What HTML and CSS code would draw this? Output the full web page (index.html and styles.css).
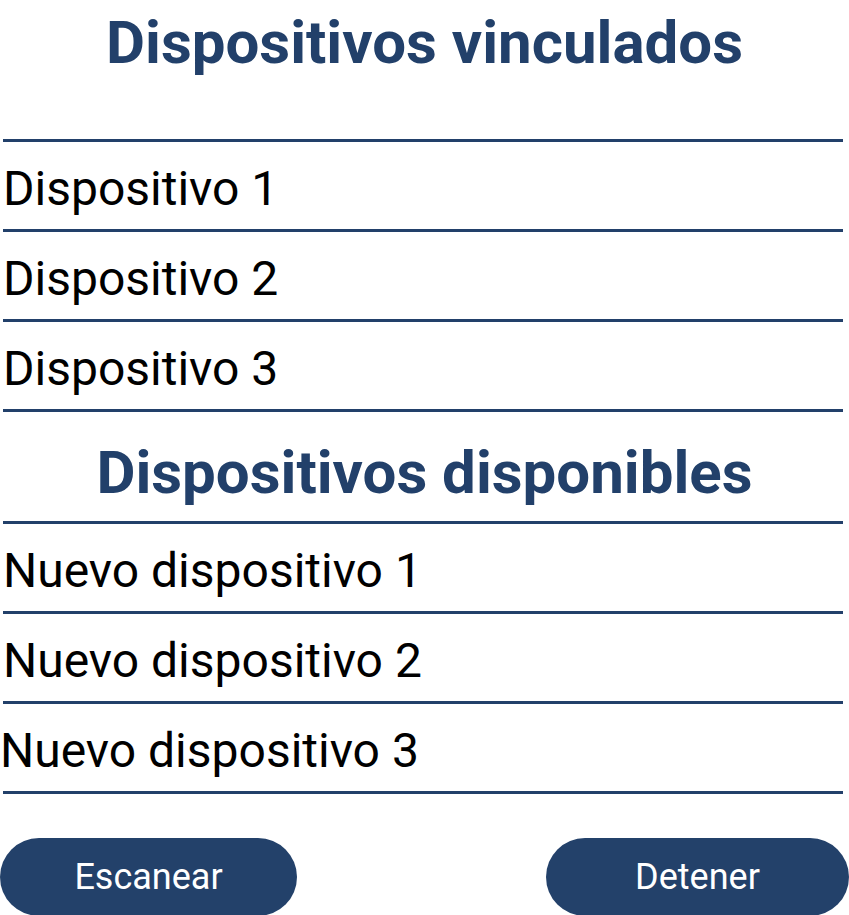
FILE: index.html
```html
<!DOCTYPE html>
<html lang="es">
<head>
<meta charset="utf-8">
<title>Dispositivos</title>
<link rel="stylesheet" href="styles.css">
</head>
<body>
<main class="screen">
  <h1 class="title title-top">Dispositivos vinculados</h1>
  <ul class="list">
    <li class="item">Dispositivo 1</li>
    <li class="item">Dispositivo 2</li>
    <li class="item">Dispositivo 3</li>
  </ul>
  <h2 class="title title-mid">Dispositivos disponibles</h2>
  <ul class="list">
    <li class="item">Nuevo dispositivo 1</li>
    <li class="item">Nuevo dispositivo 2</li>
    <li class="item item-shift">Nuevo dispositivo 3</li>
  </ul>
  <div class="actions">
    <button class="btn btn-left">Escanear</button>
    <button class="btn btn-right">Detener</button>
  </div>
</main>
</body>
</html>
```
FILE: styles.css
```css
html, body {
  margin: 0;
  padding: 0;
  background: #ffffff;
}
.screen {
  width: 849px;
  font-family: Roboto, "Liberation Sans", sans-serif;
}
.title {
  margin: 0;
  color: #22406a;
  font-weight: 700;
  font-size: 60px;
  text-align: center;
  letter-spacing: 0;
  white-space: nowrap;
}
.title-top {
  height: 139px;
  line-height: 85px;
}
.title-mid {
  height: 109px;
  line-height: 121px;
}
.list {
  list-style: none;
  margin: 0 6px 0 3px;
  padding: 0;
  border-top: 3px solid #22406a;
}
.item {
  height: 87px;
  border-bottom: 3px solid #22406a;
  font-size: 48px;
  line-height: 93px;
  color: #000;
  padding-left: 0;
  white-space: nowrap;
}
.item-shift {
  text-indent: -3px;
}
.actions {
  display: flex;
  justify-content: space-between;
  margin-top: 44px;
}
.btn {
  height: 78px;
  border: none;
  border-radius: 39px;
  background: #23416a;
  color: #fff;
  font-family: Roboto, "Liberation Sans", sans-serif;
  font-size: 36px;
  padding: 0;
}
.btn-left { width: 297px; }
.btn-right { width: 303px; }
```
